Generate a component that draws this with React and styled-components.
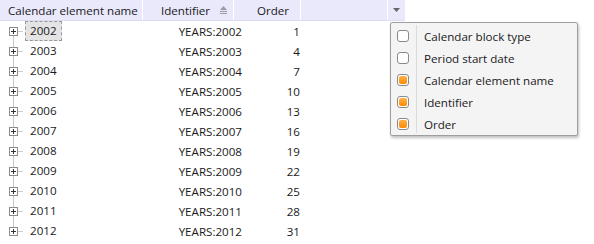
import React from 'react';
import styled, { createGlobalStyle } from 'styled-components';

const HEADER_BG = '#e9e9fb';
const TEXT = '#1a1a1a';

const GlobalStyle = createGlobalStyle`
  html, body { margin: 0; padding: 0; background: #fff; }
  body { font-family: "Open Sans", "DejaVu Sans", sans-serif; font-size: 11.6px; color: ${TEXT}; }
`;

const Page = styled.div`
  position: relative;
  width: 594px;
  height: 244px;
  overflow: hidden;
`;

const Grid = styled.div`
  width: 405px;
`;

const HeaderRow = styled.div`
  display: grid;
  grid-template-columns: 143px 91px 67px 87px 17px;
  height: 20px;
  background: ${HEADER_BG};
  border-bottom: 1px solid #dcdcf2;
`;

const HeaderCell = styled.div`
  display: flex;
  align-items: center;
  justify-content: ${({ align }) => align || 'flex-start'};
  padding-left: ${({ pad }) => pad || 0}px;
  border-right: ${({ last }) => (last ? 'none' : '1px solid #fff')};
  white-space: nowrap;
  gap: 9px;
`;

const SortIcon = () => (
  <svg width="9" height="8" viewBox="0 0 9 8">
    <polygon points="4.5,0 8,4 1,4" fill="#9a9aa8" />
    <rect x="1" y="5" width="7" height="1" fill="#9a9aa8" />
    <rect x="1" y="7" width="7" height="1" fill="#9a9aa8" />
  </svg>
);

const DropArrow = () => (
  <svg width="7" height="4" viewBox="0 0 7 4">
    <polygon points="0,0 7,0 3.5,4" fill="#666" />
  </svg>
);

const Row = styled.div`
  display: grid;
  grid-template-columns: 143px 99px 58px;
  height: 20px;
  align-items: center;
`;

const TreeCell = styled.div`
  position: relative;
  display: flex;
  align-items: center;
  height: 20px;
  padding-left: 9px;
`;

const TreeLine = styled.span`
  position: absolute;
  left: 13px;
  top: ${({ first }) => (first ? '10px' : '0')};
  bottom: ${({ last }) => (last ? '10px' : '0')};
  width: 1px;
  background: #c8c8c8;
`;

const Expander = styled.span`
  position: relative;
  z-index: 1;
  width: 9px;
  height: 9px;
  box-sizing: border-box;
  border: 1px solid #8c8c8c;
  background: #fff;

  &::before, &::after {
    content: '';
    position: absolute;
    background: #333;
  }
  &::before { width: 5px; height: 1px; left: 1px; top: 3px; }
  &::after { width: 1px; height: 5px; left: 3px; top: 1px; }
`;

const Branch = styled.span`
  width: 5px;
  height: 1px;
  background: #c8c8c8;
  margin-right: 2px;
`;

const YearLabel = styled.span`
  padding: 1px 4px;
  line-height: 16px;
  border: 1px dashed ${({ focused }) => (focused ? '#999' : 'transparent')};
  background: ${({ focused }) => (focused ? '#e4e4e4' : 'transparent')};
`;

const ValueCell = styled.div`
  text-align: right;
  white-space: nowrap;
`;

const Popup = styled.div`
  position: absolute;
  left: 390px;
  top: 22px;
  width: 188px;
  height: 114px;
  background: #f4f4f4;
  border: 1px solid #9e9e9e;
  border-radius: 2px;
  box-shadow: 1px 2px 3px rgba(0, 0, 0, 0.25);
  display: flex;
  flex-direction: column;
  padding-top: 2px;
  box-sizing: border-box;

  &::before {
    content: '';
    position: absolute;
    left: 25px;
    top: 2px;
    bottom: 2px;
    width: 1px;
    background: #dcdcdc;
  }
`;

const Item = styled.div`
  display: flex;
  align-items: center;
  height: 22px;
  padding-left: 6px;
  gap: 15px;
`;

const Check = styled.span`
  width: 12px;
  height: 12px;
  box-sizing: border-box;
  border: 1px solid #8a8a8a;
  border-radius: 3px;
  background: #fff;
  display: flex;
  align-items: center;
  justify-content: center;

  &::after {
    content: '';
    display: ${({ checked }) => (checked ? 'block' : 'none')};
    width: 8px;
    height: 8px;
    border-radius: 2px;
    background: linear-gradient(180deg, #ffb14a 0%, #ff8a00 100%);
  }
`;

const years = Array.from({ length: 11 }, (_, i) => 2002 + i);
const items = [
  { label: 'Calendar block type', checked: false },
  { label: 'Period start date', checked: false },
  { label: 'Calendar element name', checked: true },
  { label: 'Identifier', checked: true },
  { label: 'Order', checked: true },
];

export default function App() {
  return (
    <Page>
      <GlobalStyle />
      <Grid>
        <HeaderRow>
          <HeaderCell pad={8}>Calendar element name</HeaderCell>
          <HeaderCell pad={18}>Identifier <SortIcon /></HeaderCell>
          <HeaderCell pad={23}>Order</HeaderCell>
          <HeaderCell />
          <HeaderCell last align="center"><DropArrow /></HeaderCell>
        </HeaderRow>
        {years.map((y, i) => (
          <Row key={y}>
            <TreeCell>
              <TreeLine first={i === 0} last={i === years.length - 1} />
              <Expander />
              <Branch />
              <YearLabel focused={i === 0}>{y}</YearLabel>
            </TreeCell>
            <ValueCell>YEARS:{y}</ValueCell>
            <ValueCell>{1 + i * 3}</ValueCell>
          </Row>
        ))}
      </Grid>
      <Popup>
        {items.map((it) => (
          <Item key={it.label}>
            <Check checked={it.checked} />
            {it.label}
          </Item>
        ))}
      </Popup>
    </Page>
  );
}
